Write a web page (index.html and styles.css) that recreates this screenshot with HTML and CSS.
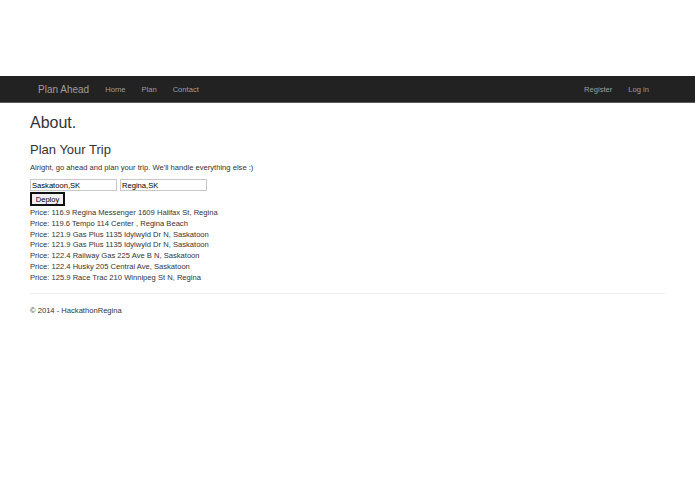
FILE: index.html
```html
<!DOCTYPE html>
<html>
<head>
<meta charset="utf-8">
<link rel="stylesheet" href="styles.css">
</head>
<body>
<div class="top-space"></div>
<nav class="navbar">
  <div class="nav-left">
    <a class="brand">Plan Ahead</a>
    <a class="nav-link">Home</a>
    <a class="nav-link">Plan</a>
    <a class="nav-link">Contact</a>
  </div>
  <div class="nav-right">
    <a class="nav-link">Register</a>
    <a class="nav-link">Log in</a>
  </div>
</nav>
<main class="container">
  <h1 class="title">About.</h1>
  <h2 class="subtitle">Plan Your Trip</h2>
  <p class="lead">Alright, go ahead and plan your trip. We'll handle everything else :)</p>
  <form class="trip-form">
    <div class="inputs">
      <input class="field" type="text" value="Saskatoon,SK">
      <input class="field" type="text" value="Regina,SK">
    </div>
    <button class="deploy" type="button">Deploy</button>
  </form>
  <ul class="results">
    <li>Price: 116.9 Regina Messenger 1609 Halifax St, Regina</li>
    <li>Price: 119.6 Tempo 114 Center , Regina Beach</li>
    <li>Price: 121.9 Gas Plus 1135 Idylwyld Dr N, Saskatoon</li>
    <li>Price: 121.9 Gas Plus 1135 Idylwyld Dr N, Saskatoon</li>
    <li>Price: 122.4 Railway Gas 225 Ave B N, Saskatoon</li>
    <li>Price: 122.4 Husky 205 Central Ave, Saskatoon</li>
    <li>Price: 125.9 Race Trac 210 Winnipeg St N, Regina</li>
  </ul>
  <hr class="divider">
  <footer class="footer">© 2014 - HackathonRegina</footer>
</main>
</body>
</html>
```
FILE: styles.css
```css
html, body {
  margin: 0;
  padding: 0;
  background: #fff;
  font-family: "Liberation Sans", Arial, sans-serif;
  color: #333;
}
.top-space {
  height: 76px;
}
.navbar {
  height: 26px;
  background: #222;
  border-bottom: 1px solid #5a5a5a;
  display: flex;
  justify-content: space-between;
  align-items: center;
  padding: 0 46px 0 38px;
}
.nav-left, .nav-right {
  display: flex;
  align-items: center;
}
.brand {
  font-size: 10px;
  color: #9d9d9d;
  margin-right: 16px;
}
.nav-link {
  font-size: 7.6px;
  color: #9d9d9d;
}
.nav-left .nav-link {
  margin-right: 16px;
}
.nav-right .nav-link {
  margin-right: 16px;
}
.nav-left .nav-link:last-child,
.nav-right .nav-link:last-child {
  margin-right: 0;
}
.container {
  padding: 0 30px;
}
.title {
  font-size: 16px;
  font-weight: normal;
  margin: 11px 0 0;
  line-height: 18px;
  color: #333;
}
.subtitle {
  font-size: 13px;
  font-weight: normal;
  margin: 10px 0 0;
  line-height: 16px;
  color: #333;
}
.lead {
  font-size: 7.6px;
  margin: 5px 0 0;
  line-height: 10px;
}
.trip-form {
  margin-top: 6px;
}
.inputs {
  display: flex;
  gap: 3px;
}
.field {
  width: 87px;
  height: 12px;
  box-sizing: border-box;
  border: 1px solid #c8c8c8;
  font-family: "Liberation Sans", Arial, sans-serif;
  font-size: 7.6px;
  color: #000;
  padding: 0 1px;
  margin: 0;
  background: #fff;
}
.deploy {
  display: block;
  margin-top: 1px;
  width: 35px;
  height: 14px;
  box-sizing: border-box;
  border: 2px solid #111;
  background: #f0f0f0;
  font-family: "Liberation Sans", Arial, sans-serif;
  font-size: 7.6px;
  color: #000;
  padding: 0;
}
.results {
  list-style: none;
  margin: 2px 0 0;
  padding: 0;
  font-size: 7.6px;
  line-height: 10.8px;
}
.divider {
  border: 0;
  border-top: 1px solid #eee;
  margin: 9px 0 0;
}
.footer {
  font-size: 7.6px;
  margin-top: 12px;
}
```
